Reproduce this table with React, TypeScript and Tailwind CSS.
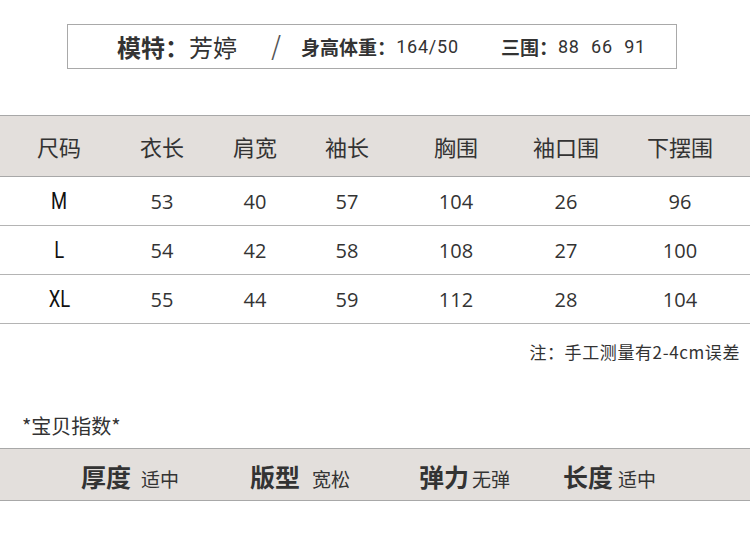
import React from 'react';

const cols = ['w-[118px]', 'w-[88px]', 'w-[98px]', 'w-[86px]', 'w-[132px]', 'w-[88px]', 'w-[140px]'];

const head = ['尺码', '衣长', '肩宽', '袖长', '胸围', '袖口围', '下摆围'];

const rows = [
  ['M', '53', '40', '57', '104', '26', '96'],
  ['L', '54', '42', '58', '108', '27', '100'],
  ['XL', '55', '44', '59', '112', '28', '104'],
];

const indexes = [
  { k: '厚度', v: '适中', w: 'w-[169px]', g: 'ml-[10px]' },
  { k: '版型', v: '宽松', w: 'w-[169px]', g: 'ml-[12px]' },
  { k: '弹力', v: '无弹', w: 'w-[144px]', g: 'ml-[3px]' },
  { k: '长度', v: '适中', w: 'w-[120px]', g: 'ml-[5px]' },
];

const font = "font-['Noto_Sans_CJK_SC','Noto_Sans',sans-serif]";
const digits = "font-['Roboto',sans-serif] tracking-[0.8px]";

export default function App() {
  return (
    <div className={`w-[750px] h-[534px] bg-white text-[#333] overflow-hidden ${font}`}>
      {/* 模特信息 */}
      <div className="pt-[24px] pl-[67px]">
        <div className="w-[610px] h-[45px] border border-[#a9a9a9] flex items-center pl-[49px] leading-none">
          <span className="text-[24px] font-bold">模特：</span>
          <span className="text-[24px]">芳婷</span>
          <span className="text-[30px] font-thin ml-[34px] text-[#555] font-['DejaVu_Sans',sans-serif]">/</span>
          <span className="text-[19px] font-bold ml-[20px]">身高体重：</span>
          <span className={`text-[18px] ${digits}`}>164/50</span>
          <span className="text-[19px] font-bold ml-[42px]">三围：</span>
          <span className={`text-[18px] ${digits} [word-spacing:6px]`}>88 66 91</span>
        </div>
      </div>

      {/* 尺码表 */}
      <div className="mt-[46px]">
        <div className="flex h-[62px] items-center bg-[#e3dfdc] border-y border-[#a8a8a8]">
          {head.map((h, i) => (
            <div key={h} className={`${cols[i]} text-center text-[22px] text-[#333]`}>
              {h}
            </div>
          ))}
        </div>
        {rows.map((r) => (
          <div key={r[0]} className="flex h-[49px] items-center border-b border-[#b4b4b4] pt-[2px]">
            {r.map((c, i) =>
              i === 0 ? (
                <div key={i} className={`${cols[i]} text-center`}>
                  <span className="inline-block scale-x-[0.8] text-[23px] font-normal font-['Roboto',sans-serif] text-[#111]">
                    {c}
                  </span>
                </div>
              ) : (
                <div key={i} className={`${cols[i]} text-center text-[20px] font-['Open_Sans',sans-serif] text-[#333]`}>
                  {c}
                </div>
              )
            )}
          </div>
        ))}
      </div>

      <div className="flex justify-end pr-[10px] pt-[19px] text-[17px] tracking-[0.6px] leading-none text-[#333]">
        注：手工测量有2-4cm误差
      </div>

      <div className="pl-[22px] pt-[56px] text-[20px] leading-none text-[#333]">*宝贝指数*</div>

      {/* 宝贝指数 */}
      <div className="mt-[12px] h-[53px] bg-[#e3dfdc] border-y border-[#a8a8a8] flex items-center pl-[81px] pt-[5px]">
        {indexes.map((x) => (
          <div key={x.k} className={`${x.w} flex items-baseline`}>
            <span className="text-[25px] font-bold text-[#333]">{x.k}</span>
            <span className={`text-[19px] ${x.g} text-[#333]`}>{x.v}</span>
          </div>
        ))}
      </div>
    </div>
  );
}
